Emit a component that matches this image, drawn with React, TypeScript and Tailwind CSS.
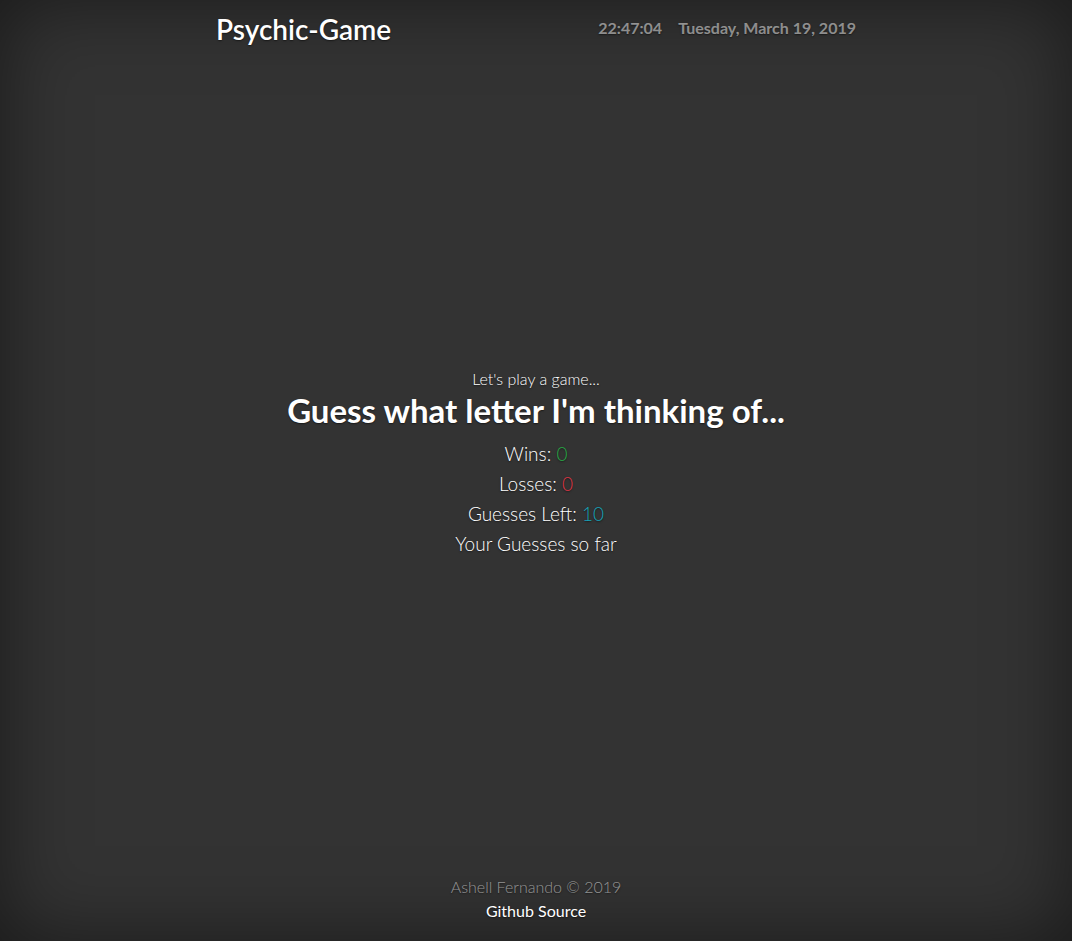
import React from "react";

export default function App() {
  return (
    <div className="h-[941px] w-full bg-[#333333] shadow-[inset_0_0_5rem_rgba(0,0,0,0.5)] text-white font-['Lato',sans-serif] [text-shadow:0_0.05rem_0.1rem_rgba(0,0,0,0.5)] flex">
      <div className="mx-auto flex h-full w-full max-w-[672px] flex-col px-4 pt-3 pb-[18px]">
        <header className="flex items-start justify-between">
          <h3 className="text-[28px] font-semibold leading-[34px] m-0">Psychic-Game</h3>
          <nav className="flex pt-[4px] text-[16px] font-bold leading-[24px] text-white/50">
            <span>22:47:04</span>
            <span className="ml-4">Tuesday, March 19, 2019</span>
          </nav>
        </header>
        <main className="flex flex-1 flex-col items-center justify-center pt-[6px] text-center">
          <p className="text-[16px] font-light leading-[22px]">Let&apos;s play a game...</p>
          <h2 className="mt-[1px] mb-[10px] text-[33px] font-bold leading-[38px]">Guess what letter I&apos;m thinking of...</h2>
          <p className="text-[19px] font-light leading-[30px]">
            Wins: <span className="text-[#28a745]">0</span>
          </p>
          <p className="text-[19px] font-light leading-[30px]">
            Losses: <span className="text-[#dc3545]">0</span>
          </p>
          <p className="text-[19px] font-light leading-[30px]">
            Guesses Left: <span className="text-[#17a2b8]">10</span>
          </p>
          <p className="text-[19px] font-light leading-[30px]">Your Guesses so far</p>
        </main>
        <footer className="flex flex-col items-center text-[16px] leading-[24px]">
          <p className="font-light text-white/50">Ashell Fernando © 2019</p>
          <a className="text-white" href="#">Github Source</a>
        </footer>
      </div>
    </div>
  );
}
